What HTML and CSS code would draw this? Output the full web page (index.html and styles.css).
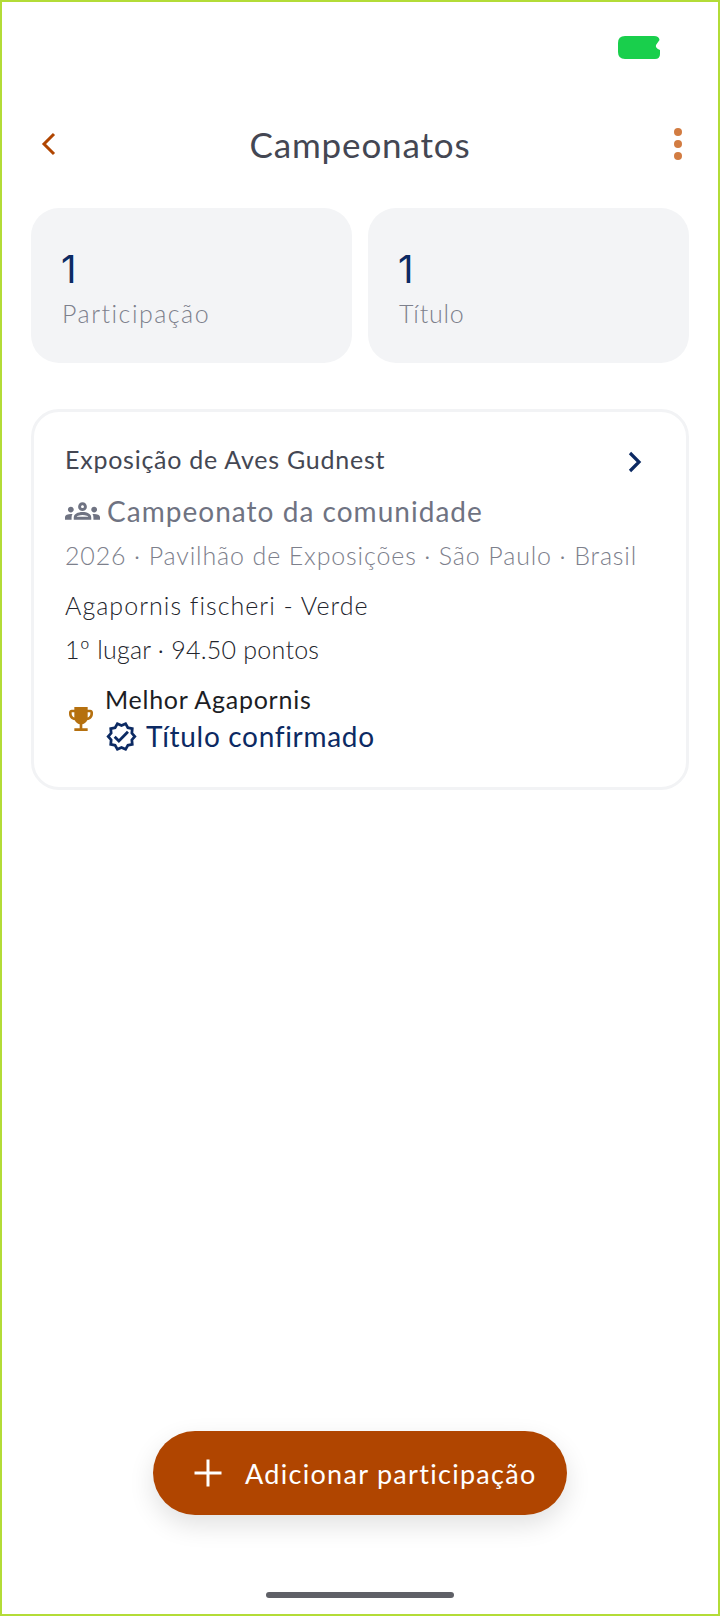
FILE: index.html
```html
<!DOCTYPE html>
<html lang="pt">
<head>
<meta charset="utf-8">
<title>Campeonatos</title>
<link rel="stylesheet" href="styles.css">
</head>
<body>
<div class="screen">
  <div class="status">
    <svg class="battery" width="42" height="23" viewBox="0 0 42 23"><path fill="#19cf4c" d="M7 0H36Q41 0 41.500 4L38 9Q37 12 42 14V18Q42 23 37 23H7Q0 23 0 16V7Q0 0 7 0Z"/></svg>
  </div>
  <header class="nav">
    <svg class="back" width="16" height="24" viewBox="0 0 16 24"><path d="M13 2 3 12l10 10" fill="none" stroke="#b04500" stroke-width="3"/></svg>
    <h1 class="title">Campeonatos</h1>
    <div class="dots"><i></i><i></i><i></i></div>
  </header>
  <section class="stats">
    <div class="stat"><div class="num">1</div><div class="lbl lbl-a">Participação</div></div>
    <div class="stat"><div class="num">1</div><div class="lbl lbl-b">Título</div></div>
  </section>
  <article class="card">
    <div class="event-row">
      <div class="event">Exposição de Aves Gudnest</div>
      <svg class="chev" width="16" height="24" viewBox="0 0 16 24"><path d="M3 3l9 9-9 9" fill="none" stroke="#0c2a63" stroke-width="3.200"/></svg>
    </div>
    <div class="kind">
      <svg class="people" width="35" height="18" viewBox="0 6 24 12" fill="#6f7382"><path d="M4 13c1.100 0 2-.9 2-2s-.9-2-2-2-2 .9-2 2 .9 2 2 2zm1.130 1.100c-.37-.06-.74-.1-1.130-.1-.99 0-1.930.21-2.780.58C.48 14.900 0 15.620 0 16.430V18h4.500v-1.610c0-.83.23-1.610.63-2.290zM20 13c1.100 0 2-.9 2-2s-.9-2-2-2-2 .9-2 2 .9 2 2 2zm4 3.430c0-.81-.48-1.530-1.220-1.850-.85-.37-1.790-.58-2.780-.58-.39 0-.76.04-1.130.1.4.68.63 1.460.63 2.290V18H24v-1.570zm-7.760-2.780c-1.170-.52-2.610-.9-4.240-.9s-3.070.39-4.240.9C6.680 14.130 6 15.210 6 16.390V18h12v-1.610c0-1.180-.68-2.260-1.760-2.740zM8.070 16c.09-.23.13-.39.91-.69.97-.38 1.990-.56 3.020-.56s2.050.18 3.020.56c.77.3.81.46.91.69H8.070zM12 8c.55 0 1 .45 1 1s-.45 1-1 1-1-.45-1-1 .45-1 1-1m0-2c-1.660 0-3 1.340-3 3s1.340 3 3 3 3-1.340 3-3-1.340-3-3-3z"/></svg>
      <span class="kind-text">Campeonato da comunidade</span>
    </div>
    <div class="place">2026 · Pavilhão de Exposições · São Paulo · Brasil</div>
    <div class="bird">Agapornis fischeri - Verde</div>
    <div class="score">1º lugar · 94.50 pontos</div>
    <div class="award">
      <svg class="trophy" width="24" height="24" viewBox="3 3 18 18" fill="#b5700f"><path d="M19 5h-2V3H7v2H5c-1.100 0-2 .9-2 2v1c0 2.550 1.920 4.630 4.390 4.940.63 1.500 1.980 2.630 3.610 2.960V19H7v2h10v-2h-4v-3.100c1.630-.33 2.980-1.460 3.610-2.960C19.080 12.630 21 10.550 21 8V7c0-1.100-.9-2-2-2zM5 8V7h2v3.820C5.840 10.400 5 9.300 5 8zm14 0c0 1.300-.84 2.400-2 2.820V7h2v1z"/></svg>
      <div class="award-text">
        <div class="award-name">Melhor Agapornis</div>
        <div class="confirmed">
          <svg width="33" height="33" viewBox="0 0 24 24" fill="#0c2a63"><path d="m23 12-2.440-2.790.34-3.690-3.610-.82-1.890-3.200L12 2.960 8.600 1.500 6.710 4.690 3.100 5.500l.34 3.700L1 12l2.440 2.790-.34 3.700 3.610.82L8.600 22.500l3.400-1.470 3.400 1.460 1.890-3.190 3.610-.82-.34-3.690L23 12zm-4.510 2.110.26 2.790-2.740.62-1.430 2.410L12 18.820l-2.580 1.110-1.430-2.410-2.740-.62.26-2.800L3.660 12l1.850-2.120-.26-2.780 2.740-.61 1.430-2.410L12 5.180l2.580-1.110 1.430 2.410 2.740.62-.26 2.790L20.340 12l-1.850 2.110z"/><path d="m10.090 13.750-2.320-2.330-1.480 1.480 3.800 3.810 7.340-7.360-1.480-1.480z"/></svg>
          <span class="confirmed-text">Título confirmado</span>
        </div>
      </div>
    </div>
  </article>
  <button class="fab">
    <svg width="30" height="30" viewBox="0 0 30 30"><path d="M15 1.500v27M1.500 15h27" stroke="#fff" stroke-width="3"/></svg>
    <span class="fab-text">Adicionar participação</span>
  </button>
  <div class="home"></div>
</div>
</body>
</html>
```
FILE: styles.css
```css
* { box-sizing: border-box; }
html, body { margin: 0; padding: 0; background: #fff; }
body { font-family: "Lato", "Noto Sans", sans-serif; }
.screen {
  position: relative;
  width: 720px;
  height: 1616px;
  border: 2px solid #b3dc37;
  padding: 0 29px;
  overflow: hidden;
  background: #fff;
}
.status { height: 34px; margin: 0 -29px; position: relative; }
.battery { position: absolute; left: 616px; top: 34px; }
.nav {
  margin-top: 76px;
  height: 64px;
  display: flex;
  align-items: center;
  justify-content: space-between;
  position: relative;
}
.back { margin-left: 10px; }
.title {
  position: absolute;
  left: 0; right: 0;
  margin: 0;
  text-align: center;
  font-size: 35px;
  font-weight: 400;
  color: #444753;
  letter-spacing: .85px;
}
.dots { display: flex; flex-direction: column; gap: 4px; margin-right: 7px; }
.dots i { display: block; width: 8px; height: 8px; border-radius: 50%; background: #d27c42; }
.stats { display: flex; gap: 16px; margin-top: 32px; }
.stat {
  flex: 1;
  height: 155px;
  border-radius: 28px;
  background: #f3f4f6;
  padding: 37px 30px 0;
}
.num { font-family: "Inter", sans-serif; font-size: 38px; line-height: 48px; color: #0c2a63; }
.lbl { font-size: 25px; line-height: 34px; font-weight: 300; color: #7d808c; margin: 3px 0 0 1px; }
.lbl-a { letter-spacing: 1.5px; }
.lbl-b { letter-spacing: .75px; }
.card {
  margin-top: 46px;
  height: 381px;
  border: 3px solid #f2f3f5;
  border-radius: 28px;
  padding: 29px 31px 0;
}
.event-row { display: flex; justify-content: space-between; align-items: flex-start; height: 36px; padding-right: 12px; }
.event { font-size: 25px; line-height: 36px; color: #444753; letter-spacing: .75px; }
.chev { margin-top: 9px; }
.kind { display: flex; align-items: center; gap: 7px; margin-top: 16px; height: 36px; }
.kind-text { font-size: 28px; color: #6f7382; letter-spacing: 1.03px; }
.place { font-size: 25px; font-weight: 300; color: #7d808c; margin-top: 8px; line-height: 36px; letter-spacing: .86px; }
.bird { font-size: 25px; font-weight: 300; color: #22242c; margin-top: 14px; line-height: 36px; letter-spacing: 1.03px; }
.score { font-size: 25px; font-weight: 300; color: #22242c; margin-top: 8px; line-height: 36px; letter-spacing: .25px; }
.award { display: flex; align-items: center; gap: 12px; margin-top: 15px; }
.trophy { flex: none; margin-left: 4px; }
.award-name { font-size: 25px; line-height: 34px; color: #1c1d24; letter-spacing: .74px; }
.confirmed { display: flex; align-items: center; gap: 8px; height: 40px; }
.confirmed-text { font-size: 28px; color: #0c2a63; letter-spacing: .68px; }
.fab {
  position: absolute;
  left: 151px;
  top: 1429px;
  width: 414px;
  height: 84px;
  border: 0;
  border-radius: 42px;
  background: #b04500;
  display: flex;
  align-items: center;
  gap: 22px;
  padding: 0 0 0 40px;
  box-shadow: 0 10px 26px rgba(0,0,0,.12);
  font-family: inherit;
}
.fab-text { font-size: 27px; color: #fff; letter-spacing: 1.3px; }
.home {
  position: absolute;
  left: 264px;
  top: 1590px;
  width: 188px;
  height: 6px;
  border-radius: 3px;
  background: #5f6067;
}
```
